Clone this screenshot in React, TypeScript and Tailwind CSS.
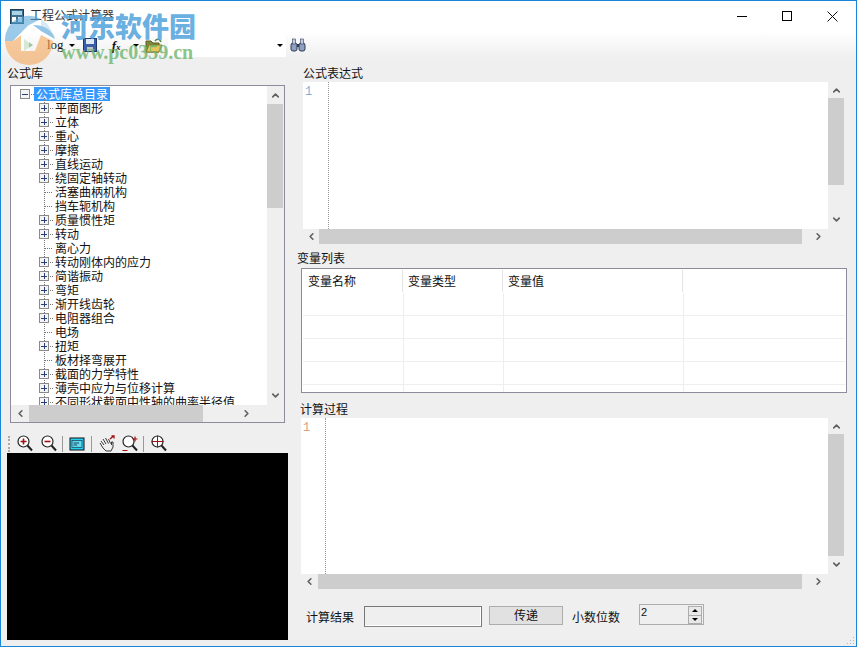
import React from 'react';
import { ChevronDown, ChevronLeft, ChevronRight, ChevronUp } from 'lucide-react';

const treeItems = [
  { label: '平面图形', leaf: false },
  { label: '立体', leaf: false },
  { label: '重心', leaf: false },
  { label: '摩擦', leaf: false },
  { label: '直线运动', leaf: false },
  { label: '绕固定轴转动', leaf: false },
  { label: '活塞曲柄机构', leaf: true },
  { label: '挡车轭机构', leaf: true },
  { label: '质量惯性矩', leaf: false },
  { label: '转动', leaf: false },
  { label: '离心力', leaf: true },
  { label: '转动刚体内的应力', leaf: false },
  { label: '简谐振动', leaf: false },
  { label: '弯矩', leaf: false },
  { label: '渐开线齿轮', leaf: false },
  { label: '电阻器组合', leaf: false },
  { label: '电场', leaf: true },
  { label: '扭矩', leaf: false },
  { label: '板材择弯展开', leaf: true },
  { label: '截面的力学特性', leaf: false },
  { label: '薄壳中应力与位移计算', leaf: false },
  { label: '不同形状截面中性轴的曲率半径值', leaf: false },
];

const HScroll: React.FC<{ before: string; thumb: string; className?: string }> = (props) => (
  <div className={`flex h-[15px] items-center bg-[#efefef] ${props.className ?? ''}`}>
    <div className={`flex h-full items-center justify-center ${props.before}`}>
      <ChevronLeft size={11} strokeWidth={3.5} className="text-[#606060]" />
    </div>
    <div className={`h-full bg-[#cdcdcd] ${props.thumb}`} />
    <div className="flex h-full flex-1 items-center justify-center pl-[6px]">
      <ChevronRight size={11} strokeWidth={3.5} className="text-[#606060]" />
    </div>
  </div>
);

const VScroll: React.FC<{ thumb: string; before: string }> = (props) => (
  <div className="flex w-4 flex-col items-center bg-[#efefef]">
    <div className={`flex w-full items-center justify-center ${props.before}`}>
      <ChevronUp size={11} strokeWidth={3.5} className="text-[#606060]" />
    </div>
    <div className={`w-full bg-[#cdcdcd] ${props.thumb}`} />
    <div className="flex w-full flex-1 items-end justify-center pb-[4px]">
      <ChevronDown size={11} strokeWidth={3.5} className="text-[#606060]" />
    </div>
  </div>
);

const Editor: React.FC<{
  lineColor: string;
  gutter: string;
  height: string;
  vThumb: string;
  hBefore: string;
  hThumb: string;
  offset: string;
}> = (props) => (
  <div className={props.offset}>
    <div className={`flex ${props.height}`}>
      <div className="flex-1 bg-white">
        <div className={`h-full border-r border-dotted border-[#999] ${props.gutter}`}>
          <div className={`pl-[2px] pt-[4px] font-['Liberation_Mono',monospace] text-[12px] leading-[13px] ${props.lineColor}`}>1</div>
        </div>
      </div>
      <VScroll thumb={props.vThumb} before="h-[16px]" />
    </div>
    <div className="flex">
      <HScroll before={props.hBefore} thumb={props.hThumb} className="flex-1" />
      <div className="w-4" />
    </div>
  </div>
);

const Lens: React.FC<{ children?: React.ReactNode }> = ({ children }) => (
  <svg width="16" height="17" viewBox="0 0 16 17" fill="none">
    <circle cx="6.5" cy="6.5" r="5.5" fill="#fff" stroke="#222" strokeWidth="1.2" />
    <path d="M10.5 10.5 L15 15.5" stroke="#222" strokeWidth="2" />
    {children}
  </svg>
);

const Tree = () => (
  <div className="relative flex-1 overflow-hidden bg-white pl-[9px] pt-px text-[12px] leading-[14px] text-[#111]">
    <div className="absolute bottom-0 left-[33px] top-[12px] border-l border-dotted border-[#777]" />
    <div className="flex h-[14px] items-center">
      <span className="flex h-[10px] w-[10px] items-center justify-center border border-[#8a8a8a] bg-[#f4f4f4]">
        <span className="h-px w-[6px] bg-[#2a3f7a]" />
      </span>
      <span className="ml-px w-[3px] border-t border-dotted border-[#777]" />
      <span className="bg-[#3399ff] px-[2px] text-white">公式库总目录</span>
    </div>
    {treeItems.map((item) => (
      <div key={item.label} className="relative flex h-[14px] items-center whitespace-nowrap pl-[19px]">
        {item.leaf ? (
          <span className="ml-[5px] mr-[2px] w-[8px] border-t border-dotted border-[#777]" />
        ) : (
          <>
            <span className="relative flex h-[10px] w-[10px] items-center justify-center border border-[#8a8a8a] bg-[#f4f4f4]">
              <span className="h-px w-[6px] bg-[#2a3f7a]" />
              <span className="absolute h-[6px] w-px bg-[#2a3f7a]" />
            </span>
            <span className="mx-px w-[3px] border-t border-dotted border-[#777]" />
          </>
        )}
        <span className="pl-px">{item.label}</span>
      </div>
    ))}
  </div>
);

const Watermark = () => (
  <div className="pointer-events-none absolute left-0 top-[10px] flex">
    <svg width="58" height="54" viewBox="0 0 58 54" className="opacity-60">
      <path d="M4 30 A24 24 0 0 1 40 8 L28 14 L12 30 Z" fill="#5aa9dc" />
      <path d="M40 8 A24 24 0 0 1 52 26 L40 20 Z" fill="#bcdcf0" />
      <path d="M4 30 L12 30 L20 24 L20 40 L34 40 L40 24 L52 30 A24 24 0 0 1 4 30 Z" fill="#f5a85a" />
      <path d="M12 30 L28 14 L28 40 L20 40 L20 24 Z" fill="#ffffff" />
      <path d="M32 14 C44 14 52 20 54 28 L40 20 Z" fill="#4a9fd8" />
    </svg>
    <div className="ml-[2px] flex flex-col">
      <span className="font-['Noto_Sans_CJK_SC',sans-serif] text-[27px] font-black leading-[30px] text-[#55a5dc]/90">河东软件园</span>
      <span className="mt-[1px] font-['Liberation_Serif',serif] text-[20px] font-bold leading-[20px] text-[#6cb56c]/80">www.pc0359.cn</span>
    </div>
  </div>
);

const Arrow = () => <span className="h-0 w-0 border-x-[3px] border-t-[3px] border-x-transparent border-t-black" />;

export default function App() {
  return (
    <div className="relative flex h-[647px] w-[857px] flex-col overflow-hidden border border-[#1a86d8] bg-[#efefef] font-['Noto_Sans_CJK_SC','Liberation_Sans',sans-serif] text-[12px] text-[#111]">
      {/* title bar */}
      <div className="flex h-[30px] items-center bg-white pl-[9px]">
        <svg width="14" height="15" viewBox="0 0 14 15">
          <rect x="0.5" y="0.5" width="13" height="14" fill="#3f6f8f" stroke="#1f3f55" />
          <rect x="2" y="2" width="10" height="4" fill="#a9d3e6" />
          <rect x="2" y="8" width="4" height="5" fill="#fff" />
          <rect x="8" y="8" width="4" height="5" fill="#dfe9ee" />
        </svg>
        <span className="mb-[2px] ml-[6px] leading-none text-[#333]">工程公式计算器</span>
        <div className="ml-auto flex items-center pr-[18px]">
          <span className="mr-[35px] h-px w-[10px] bg-black" />
          <span className="mr-[35px] h-[10px] w-[10px] border border-black" />
          <svg width="11" height="11" viewBox="0 0 11 11">
            <path d="M0.5 0.5 L10.5 10.5 M10.5 0.5 L0.5 10.5" stroke="#111" strokeWidth="1" />
          </svg>
        </div>
      </div>

      {/* toolbar */}
      <div className="flex h-[28px] items-center bg-gradient-to-b from-white to-[#efefef] pl-[21px]">
        <svg width="12" height="14" viewBox="0 0 12 14">
          <path d="M2 1 L11 7 L2 13 Z" fill="#9cc79c" />
        </svg>
        <span className="ml-[13px] font-['Liberation_Serif',serif] text-[13px]">log</span>
        <span className="ml-[5px] flex"><Arrow /></span>
        <svg width="14" height="14" viewBox="0 0 14 14" className="ml-[8px]">
          <rect x="0.5" y="0.5" width="13" height="13" fill="#3a5fa8" stroke="#20376b" />
          <rect x="3" y="1" width="8" height="5" fill="#dfe8f5" />
          <rect x="4" y="9" width="6" height="4" fill="#c4c4c4" />
        </svg>
        <span className="ml-[15px] w-[12px] whitespace-nowrap font-['Liberation_Serif',serif] text-[13px] font-bold italic leading-none">f<span className="text-[9px]">x</span></span>
        <span className="ml-[9px] flex"><Arrow /></span>
        <svg width="18" height="15" viewBox="0 0 18 15" className="ml-[6px]">
          <path d="M1 3 H6 L8 5 H14 V14 H1 Z" fill="#7d8a3a" stroke="#5a5a20" />
          <path d="M1 14 L4 7 H17 L14 14 Z" fill="#e6c65a" stroke="#8a7428" />
          <path d="M10 3 C12 0 15 1 16 4" fill="none" stroke="#4a8a4a" strokeWidth="1.5" />
        </svg>
        <div className="ml-[5px] flex h-[24px] w-[118px] items-center justify-end bg-white pr-[3px]">
          <Arrow />
        </div>
        <svg width="16" height="14" viewBox="0 0 16 14" className="ml-[4px]">
          <rect x="1" y="5" width="6" height="8" rx="2" fill="#8f9fc0" stroke="#2f3b57" />
          <rect x="9" y="5" width="6" height="8" rx="2" fill="#8f9fc0" stroke="#2f3b57" />
          <rect x="2.5" y="1" width="3" height="5" fill="#c3cde0" stroke="#2f3b57" strokeWidth="0.6" />
          <rect x="10.5" y="1" width="3" height="5" fill="#c3cde0" stroke="#2f3b57" strokeWidth="0.6" />
          <rect x="7" y="6" width="2" height="3" fill="#2f3b57" />
        </svg>
      </div>

      {/* body */}
      <div className="flex flex-1">
        <div className="w-[296px] shrink-0 pl-[6px]">
          <div className="pt-[6px] leading-[15px]">公式库</div>
          <div className="ml-[3px] mt-[5px] flex h-[338px] w-[275px] flex-col border border-[#8c8c9c]">
            <div className="flex h-[319px] pr-px">
              <Tree />
              <VScroll before="h-[18px]" thumb="h-[104px]" />
            </div>
            <HScroll before="w-[18px]" thumb="w-[174px]" className="h-[17px]" />
          </div>
          <div className="mt-[11px] flex h-[19px] items-center pl-px">
            <span className="h-[16px] w-[2px] border-l-2 border-dotted border-[#aaa]" />
            <span className="ml-[7px] flex"><Lens><path d="M3.5 6.5 H9.5 M6.5 3.5 V9.5" stroke="#a01010" strokeWidth="1.6" /></Lens></span>
            <span className="ml-[8px] flex"><Lens><path d="M3.5 6.5 H9.5" stroke="#a01010" strokeWidth="1.6" /></Lens></span>
            <span className="ml-[5px] h-[16px] w-px bg-[#999]" />
            <svg width="16" height="14" viewBox="0 0 16 14" className="ml-[6px]">
              <rect x="0.5" y="0.5" width="15" height="13" fill="#111" />
              <rect x="1.5" y="1.5" width="13" height="11" fill="#26d0f0" />
              <rect x="3" y="3.5" width="10" height="7" fill="#5fd8f0" stroke="#123" strokeWidth="0.6" />
              <path d="M4.5 6 H10 M4.5 8 H8" stroke="#123" strokeWidth="0.8" />
            </svg>
            <span className="ml-[6px] h-[16px] w-px bg-[#999]" />
            <svg width="16" height="17" viewBox="0 0 16 17" className="ml-[7px]" fill="none">
              <path d="M1 8 L4 13 L7 16 H12 L14 12 V7 L12.5 7 V10 M2 6 L5 10 M4 4 L7 9 M6.5 3 L9.5 8.5 M9.5 4 L11.5 8.5" stroke="#222" strokeWidth="0.9" />
              <path d="M11 4 L14.5 1 M12.5 1 H15 V3.5" stroke="#a01010" strokeWidth="1.3" />
            </svg>
            <span className="ml-[7px] flex">
              <Lens><path d="M10.5 4 H15.5 M13 1.5 V6.5 M0.5 15.5 H5.5" stroke="#a01010" strokeWidth="1.2" /></Lens>
            </span>
            <span className="ml-[5px] h-[16px] w-px bg-[#999]" />
            <span className="ml-[7px] flex"><Lens><path d="M6.5 0.5 V12.5 M0.5 6.5 H12.5" stroke="#a01010" strokeWidth="1" /></Lens></span>
          </div>
          <div className="h-[187px] w-[281px] bg-black" />
        </div>

        <div className="min-w-0 flex-1">
          <div className="pl-[6px] pt-[6px] leading-[15px]">公式表达式</div>
          <Editor
            offset="ml-[6px] mr-[12px] mt-[2px]"
            height="h-[147px]"
            gutter="w-[26px]"
            lineColor="text-[#7fb0d8]"
            vThumb="h-[87px]"
            hBefore="w-[16px]"
            hThumb="w-[483px]"
          />
          <div className="mt-[6px] leading-[15px]">变量列表</div>
          <div className="ml-[4px] mt-[3px] h-[125px] w-[546px] border border-[#8c8c9c] bg-white p-px">
            <div className="grid h-[23px] grid-cols-[100px_100px_180px_1fr] leading-[21px]">
              <div className="mb-px border-r border-[#e4e4e4] pl-[5px]">变量名称</div>
              <div className="mb-px border-r border-[#e4e4e4] pl-[5px]">变量类型</div>
              <div className="mb-px border-r border-[#e4e4e4] pl-[5px]">变量值</div>
              <div />
            </div>
            {['h-[23px]', 'h-[23px]', 'h-[23px]', 'h-[23px]', 'h-[7px]'].map((h, i) => (
              <div key={i} className={`grid grid-cols-[101px_100px_180px_1fr] border-[#eeeeee] ${i < 4 ? 'border-b' : ''} ${h}`}>
                <div className="border-r border-[#eeeeee]" />
                <div className="border-r border-[#eeeeee]" />
                <div className="border-r border-[#eeeeee]" />
                <div />
              </div>
            ))}
          </div>
          <div className="ml-[3px] mt-[8px] leading-[15px]">计算过程</div>
          <Editor
            offset="ml-[4px] mr-[12px] mt-[2px]"
            height="h-[156px]"
            gutter="w-[25px]"
            lineColor="text-[#d8a07f]"
            vThumb="h-[122px]"
            hBefore="w-[17px]"
            hThumb="w-[484px]"
          />
          <div className="mt-[15px] flex items-start pl-[9px]">
            <span className="mt-[5px] leading-[15px]">计算结果</span>
            <div className="ml-[10px] mt-[2px] h-[21px] w-[118px] border border-[#777] border-b-[#888] bg-[#efefef] shadow-[inset_-1px_-1px_0_#fff]" />
            <div className="ml-[7px] mt-[2px] flex h-[19px] w-[74px] items-center justify-center border border-[#adadad] bg-[#e1e1e1] pb-px">传递</div>
            <span className="ml-[9px] mt-[5px] leading-[15px]">小数位数</span>
            <div className="ml-[19px] flex h-[21px] w-[65px] items-start border border-[#adadad] bg-[#efefef]">
              <span className="flex-1 pl-px font-['Liberation_Sans',sans-serif] text-[11px] leading-[15px]">2</span>
              <div className="mr-px mt-px flex h-[18px] w-[14px] flex-col items-center justify-between border border-[#adadad] bg-[#e8e8e8]">
                <span className="mt-[2px] h-0 w-0 border-x-[3px] border-b-[3px] border-x-transparent border-b-black" />
                <span className="h-px w-full bg-[#adadad]" />
                <span className="mb-[2px] h-0 w-0 border-x-[3px] border-t-[3px] border-x-transparent border-t-black" />
              </div>
            </div>
          </div>
        </div>
      </div>

      <Watermark />
      {/* resize grip */}
      <svg width="8" height="8" viewBox="0 0 8 8" className="absolute bottom-px right-px">
        <path d="M6 0h1v1H6z M3 3h1v1H3z M6 3h1v1H6z M0 6h1v1H0z M3 6h1v1H3z M6 6h1v1H6z" fill="#b5b5b5" />
      </svg>
    </div>
  );
}
